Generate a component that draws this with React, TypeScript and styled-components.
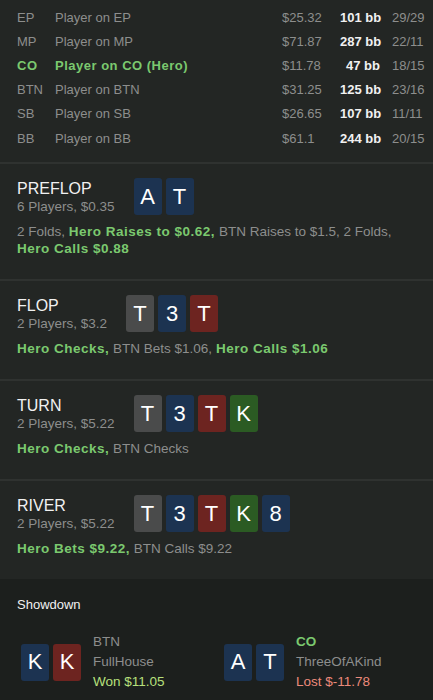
import styled, { createGlobalStyle } from 'styled-components';

type Suit = 'gray' | 'blue' | 'red' | 'green';

interface Seat {
  pos: string;
  name: string;
  stack: string;
  bb: string;
  ratio: string;
  hero?: boolean;
}

interface Action {
  text: string;
  hero?: boolean;
}

interface Street {
  title: string;
  sub: string;
  cards: [string, Suit][];
  actions: Action[];
}

const GlobalStyle = createGlobalStyle`
  html, body {
    margin: 0;
    padding: 0;
    background: #1c1f1d;
  }
  body {
    font-family: "Liberation Sans", Arial, sans-serif;
    color: #8d8e8d;
  }
`;

const suitColors: Record<Suit, string> = {
  gray: '#4a4b4b',
  blue: '#1c3351',
  red: '#6d2420',
  green: '#2b5b23',
};

const Page = styled.div`
  width: 433px;
  min-height: 700px;
  background: #232624;
  display: flex;
  flex-direction: column;
`;

const SeatTable = styled.div`
  display: grid;
  grid-template-columns: 38px 1fr 58px 40px 53px;
  grid-auto-rows: 24.2px;
  align-items: center;
  padding: 5px 0 12px 17px;
  font-size: 13px;
`;

const Cell = styled.div<{ $hero?: boolean; $strong?: boolean; $right?: boolean; $pad?: boolean }>`
  color: ${p => (p.$hero ? '#7bc96f' : p.$strong ? '#f1f1f1' : '#8d8e8d')};
  font-weight: ${p => (p.$hero || p.$strong ? 700 : 400)};
  letter-spacing: ${p => (p.$hero ? '0.5px' : '0')};
  text-align: ${p => (p.$right ? 'right' : 'left')};
  padding-left: ${p => (p.$pad ? '12px' : '0')};
  white-space: nowrap;
`;

const StreetBlock = styled.section`
  border-top: 2px solid #2f3230;
  padding: 14px 17px 22px;
`;

const StreetHeader = styled.div`
  display: flex;
  align-items: center;
  gap: 19px;
`;

const StreetInfo = styled.div`
  display: flex;
  flex-direction: column;
`;

const StreetTitle = styled.div`
  color: #f1f1f1;
  font-size: 16px;
  line-height: 19px;
`;

const StreetSub = styled.div`
  font-size: 13.5px;
  line-height: 17px;
  color: #8d8e8d;
`;

const CardRow = styled.div`
  display: flex;
  gap: 4px;
`;

const Card = styled.div<{ $suit: Suit }>`
  width: 28px;
  height: 37px;
  border-radius: 3px;
  background: ${p => suitColors[p.$suit]};
  color: #ffffff;
  font-size: 22px;
  display: flex;
  align-items: center;
  justify-content: center;
`;

const Actions = styled.div`
  margin-top: 8px;
  font-size: 13.5px;
  line-height: 17px;
  color: #8d8e8d;
`;

const ActionText = styled.span<{ $hero?: boolean }>`
  color: ${p => (p.$hero ? '#7bc96f' : '#8d8e8d')};
  font-weight: ${p => (p.$hero ? 700 : 400)};
  letter-spacing: ${p => (p.$hero ? '0.5px' : '0')};
  white-space: ${p => (p.$hero ? 'nowrap' : 'normal')};
`;

const Showdown = styled.section`
  flex: 1;
  background: #1c1f1d;
  padding: 17px 0 10px;
`;

const ShowdownTitle = styled.div`
  color: #f1f1f1;
  font-size: 13px;
  line-height: 18px;
  padding-left: 17px;
`;

const Hands = styled.div`
  display: grid;
  grid-template-columns: 203px 1fr;
  padding-left: 21px;
  margin-top: 18px;
`;

const Hand = styled.div`
  display: flex;
  align-items: center;
  gap: 12px;
`;

const HandInfo = styled.div`
  font-size: 13.5px;
  line-height: 20px;
  display: flex;
  flex-direction: column;
`;

const HandLine = styled.div<{ $tone?: 'hero' | 'won' | 'lost' }>`
  color: ${p =>
    p.$tone === 'hero' ? '#7bc96f' : p.$tone === 'won' ? '#b7e07c' : p.$tone === 'lost' ? '#ec8a7b' : '#8d8e8d'};
  font-weight: ${p => (p.$tone === 'hero' ? 700 : 400)};
`;

const seats: Seat[] = [
  { pos: 'EP', name: 'Player on EP', stack: '$25.32', bb: '101 bb', ratio: '29/29' },
  { pos: 'MP', name: 'Player on MP', stack: '$71.87', bb: '287 bb', ratio: '22/11' },
  { pos: 'CO', name: 'Player on CO (Hero)', stack: '$11.78', bb: '47 bb', ratio: '18/15', hero: true },
  { pos: 'BTN', name: 'Player on BTN', stack: '$31.25', bb: '125 bb', ratio: '23/16' },
  { pos: 'SB', name: 'Player on SB', stack: '$26.65', bb: '107 bb', ratio: '11/11' },
  { pos: 'BB', name: 'Player on BB', stack: '$61.1', bb: '244 bb', ratio: '20/15' },
];

const board: [string, Suit][] = [
  ['T', 'gray'],
  ['3', 'blue'],
  ['T', 'red'],
  ['K', 'green'],
  ['8', 'blue'],
];

const streets: Street[] = [
  {
    title: 'PREFLOP',
    sub: '6 Players, $0.35',
    cards: [['A', 'blue'], ['T', 'blue']],
    actions: [
      { text: '2 Folds,' },
      { text: 'Hero Raises to $0.62,', hero: true },
      { text: 'BTN Raises to $1.5, 2 Folds,' },
      { text: 'Hero Calls $0.88', hero: true },
    ],
  },
  {
    title: 'FLOP',
    sub: '2 Players, $3.2',
    cards: board.slice(0, 3),
    actions: [
      { text: 'Hero Checks,', hero: true },
      { text: 'BTN Bets $1.06,' },
      { text: 'Hero Calls $1.06', hero: true },
    ],
  },
  {
    title: 'TURN',
    sub: '2 Players, $5.22',
    cards: board.slice(0, 4),
    actions: [{ text: 'Hero Checks,', hero: true }, { text: 'BTN Checks' }],
  },
  {
    title: 'RIVER',
    sub: '2 Players, $5.22',
    cards: board,
    actions: [{ text: 'Hero Bets $9.22,', hero: true }, { text: 'BTN Calls $9.22' }],
  },
];

function Cards({ cards }: { cards: [string, Suit][] }) {
  return (
    <CardRow>
      {cards.map(([rank, suit], i) => (
        <Card key={i} $suit={suit}>{rank}</Card>
      ))}
    </CardRow>
  );
}

export default function App() {
  return (
    <Page>
      <GlobalStyle />
      <SeatTable>
        {seats.map(s => [
          <Cell key={s.pos + 'p'} $hero={s.hero}>{s.pos}</Cell>,
          <Cell key={s.pos + 'n'} $hero={s.hero}>{s.name}</Cell>,
          <Cell key={s.pos + 's'}>{s.stack}</Cell>,
          <Cell key={s.pos + 'b'} $strong $right>{s.bb}</Cell>,
          <Cell key={s.pos + 'r'} $pad>{s.ratio}</Cell>,
        ])}
      </SeatTable>

      {streets.map(st => (
        <StreetBlock key={st.title}>
          <StreetHeader>
            <StreetInfo>
              <StreetTitle>{st.title}</StreetTitle>
              <StreetSub>{st.sub}</StreetSub>
            </StreetInfo>
            <Cards cards={st.cards} />
          </StreetHeader>
          <Actions>
            {st.actions.map((a, i) => (
              <span key={i}>
                <ActionText $hero={a.hero}>{a.text}</ActionText>
                {i < st.actions.length - 1 ? ' ' : ''}
              </span>
            ))}
          </Actions>
        </StreetBlock>
      ))}

      <Showdown>
        <ShowdownTitle>Showdown</ShowdownTitle>
        <Hands>
          <Hand>
            <Cards cards={[['K', 'blue'], ['K', 'red']]} />
            <HandInfo>
              <HandLine>BTN</HandLine>
              <HandLine>FullHouse</HandLine>
              <HandLine $tone="won">Won $11.05</HandLine>
            </HandInfo>
          </Hand>
          <Hand>
            <Cards cards={[['A', 'blue'], ['T', 'blue']]} />
            <HandInfo>
              <HandLine $tone="hero">CO</HandLine>
              <HandLine>ThreeOfAKind</HandLine>
              <HandLine $tone="lost">Lost $-11.78</HandLine>
            </HandInfo>
          </Hand>
        </Hands>
      </Showdown>
    </Page>
  );
}
